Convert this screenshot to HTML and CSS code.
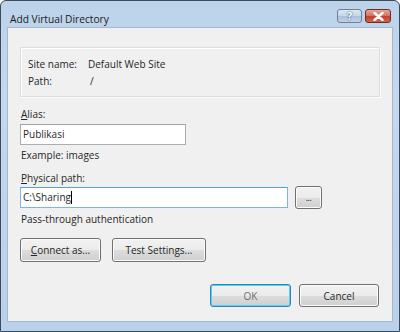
FILE: index.html
```html
<!DOCTYPE html>
<html lang="en">
<head>
    <meta charset="UTF-8">
    <title>Add Virtual Directory</title>
    <link rel="stylesheet" href="styles.css">
</head>
<body>

    <div class="window">
        <div class="titleBar">
            <div class="titleText">Add Virtual Directory</div>
            <div class="captionButtons">
                <div class="capButton helpButton">?</div>
                <div class="capButton closeButton">
                    <svg width="11" height="9" viewBox="0 0 11 9">
                        <path d="M1.5 1 L9.5 8 M9.5 1 L1.5 8" stroke="#fff" stroke-width="2.4" stroke-linecap="round"/>
                    </svg>
                </div>
            </div>
        </div>

        <div class="client">
            <div class="groupBox">
                <div class="infoRow"><span class="infoLabel">Site name:</span><span>Default Web Site</span></div>
                <div class="infoRow"><span class="infoLabel">Path:</span><span class="slash">/</span></div>
            </div>

            <label class="fieldLabel aliasLabel"><u>A</u>lias:</label>
            <div class="textBox aliasBox">Publikasi</div>
            <div class="hint">Example: images</div>

            <label class="fieldLabel pathLabel"><u>P</u>hysical path:</label>
            <div class="pathRow">
                <div class="textBox pathBox">C:\Sharing<span class="caret"></span></div>
                <div class="button browseButton">...</div>
            </div>
            <div class="hint authText">Pass-through authentication</div>

            <div class="buttonRow">
                <div class="button connectButton"><u>C</u>onnect as...</div>
                <div class="button testButton">Test Settings...</div>
            </div>

            <div class="dialogButtons">
                <div class="button okButton">OK</div>
                <div class="button cancelButton">Cancel</div>
            </div>
        </div>
    </div>

</body>
</html>
```

FILE: styles.css
```css
body {
    margin: 0;
    padding: 0;
    font-family: 'Open Sans', 'Noto Sans', sans-serif;
    font-size: 10px;
    color: #262626;
    background-color: #fff;
}

.window {
    width: 400px;
    height: 332px;
    box-sizing: border-box;
    border: 1px solid #3b4a5c;
    border-radius: 6px 6px 0 0;
    background: linear-gradient(to bottom, #bcd3ea 0%, #c4d8ee 30%, #b9d1ea 100%);
    display: flex;
    flex-direction: column;
    padding: 0 6px 9px 6px;
}

.titleBar {
    height: 26px;
    display: flex;
    justify-content: space-between;
    align-items: flex-start;
}

.titleText {
    font-size: 10.2px;
    color: #1a1a1a;
    padding: 11px 0 0 3px;
}

.captionButtons {
    display: flex;
    gap: 3px;
    padding-top: 8px;
    padding-right: 2px;
}

.capButton {
    height: 12px;
    border: 1px solid #6e7f96;
    border-radius: 3px;
    display: flex;
    align-items: center;
    justify-content: center;
    box-sizing: content-box;
}

.helpButton {
    width: 23px;
    background: linear-gradient(to bottom, #dbe7f4 0%, #c5d6ea 50%, #a9c0dc 51%, #bfd3ea 100%);
    color: #fff;
    font-weight: bold;
    font-size: 11px;
    line-height: 12px;
    text-shadow: 0 0 2px #4a6183, 0 0 1px #4a6183;
}

.closeButton {
    width: 24px;
    background: linear-gradient(to bottom, #e8a596 0%, #d67863 45%, #c0422a 55%, #d6624c 100%);
    border-color: #6b2f26;
}

.client {
    flex: 1;
    background-color: #f0f0f0;
    border: 1px solid #a5b8cf;
    padding: 0 12px;
}

.groupBox {
    margin-top: 19px;
    height: 50px;
    border: 1px solid #dcdcdc;
    box-shadow: inset 1px 1px 0 #fff, 1px 1px 0 #fff;
    padding: 8px 0 0 7px;
    box-sizing: border-box;
}

.infoRow {
    display: flex;
    height: 17px;
    line-height: 17px;
}

.infoLabel {
    width: 60px;
}

.slash {
    padding-left: 2px;
}

.fieldLabel {
    display: block;
    line-height: 16px;
    padding-left: 1px;
}

.aliasLabel {
    margin-top: 9px;
}

.textBox {
    height: 19px;
    line-height: 19px;
    background-color: #fff;
    border: 1px solid #abadb3;
    border-top-color: #a3a3a3;
    padding: 0 2px;
    box-sizing: content-box;
}

.aliasBox {
    width: 160px;
    margin-top: 2px;
}

.hint {
    line-height: 16px;
    margin-top: 2px;
    padding-left: 1px;
}

.pathLabel {
    margin-top: 8px;
    line-height: 15px;
}

.pathRow {
    display: flex;
    align-items: center;
    gap: 7px;
}

.pathBox {
    width: 262px;
    border-color: #7eb4ea;
    border-top-color: #569de5;
}

.caret {
    display: inline-block;
    width: 1px;
    height: 13px;
    background-color: #000;
    vertical-align: -3px;
}

.authText {
    margin-top: 2px;
}

.button {
    height: 22px;
    border: 1px solid #707070;
    border-radius: 3px;
    background: linear-gradient(to bottom, #f2f2f2 0%, #ebebeb 50%, #dddddd 51%, #cfcfcf 100%);
    box-shadow: inset 0 0 0 1px #fbfbfb;
    display: flex;
    align-items: center;
    justify-content: center;
    box-sizing: content-box;
    color: #262626;
}

.browseButton {
    width: 25px;
    height: 21px;
    font-size: 9px;
    letter-spacing: -0.5px;
}

.buttonRow {
    display: flex;
    gap: 11px;
    margin-top: 11px;
}

.connectButton {
    width: 79px;
}

.testButton {
    width: 92px;
}

.dialogButtons {
    display: flex;
    justify-content: flex-end;
    gap: 8px;
    margin-top: 22px;
    padding-right: 1px;
}

.okButton {
    width: 79px;
    height: 21px;
    border-color: #3c7fb1;
    box-shadow: inset 0 0 0 1px #48d8fb;
    color: #6d6d6d;
}

.cancelButton {
    width: 78px;
    height: 21px;
}
```
